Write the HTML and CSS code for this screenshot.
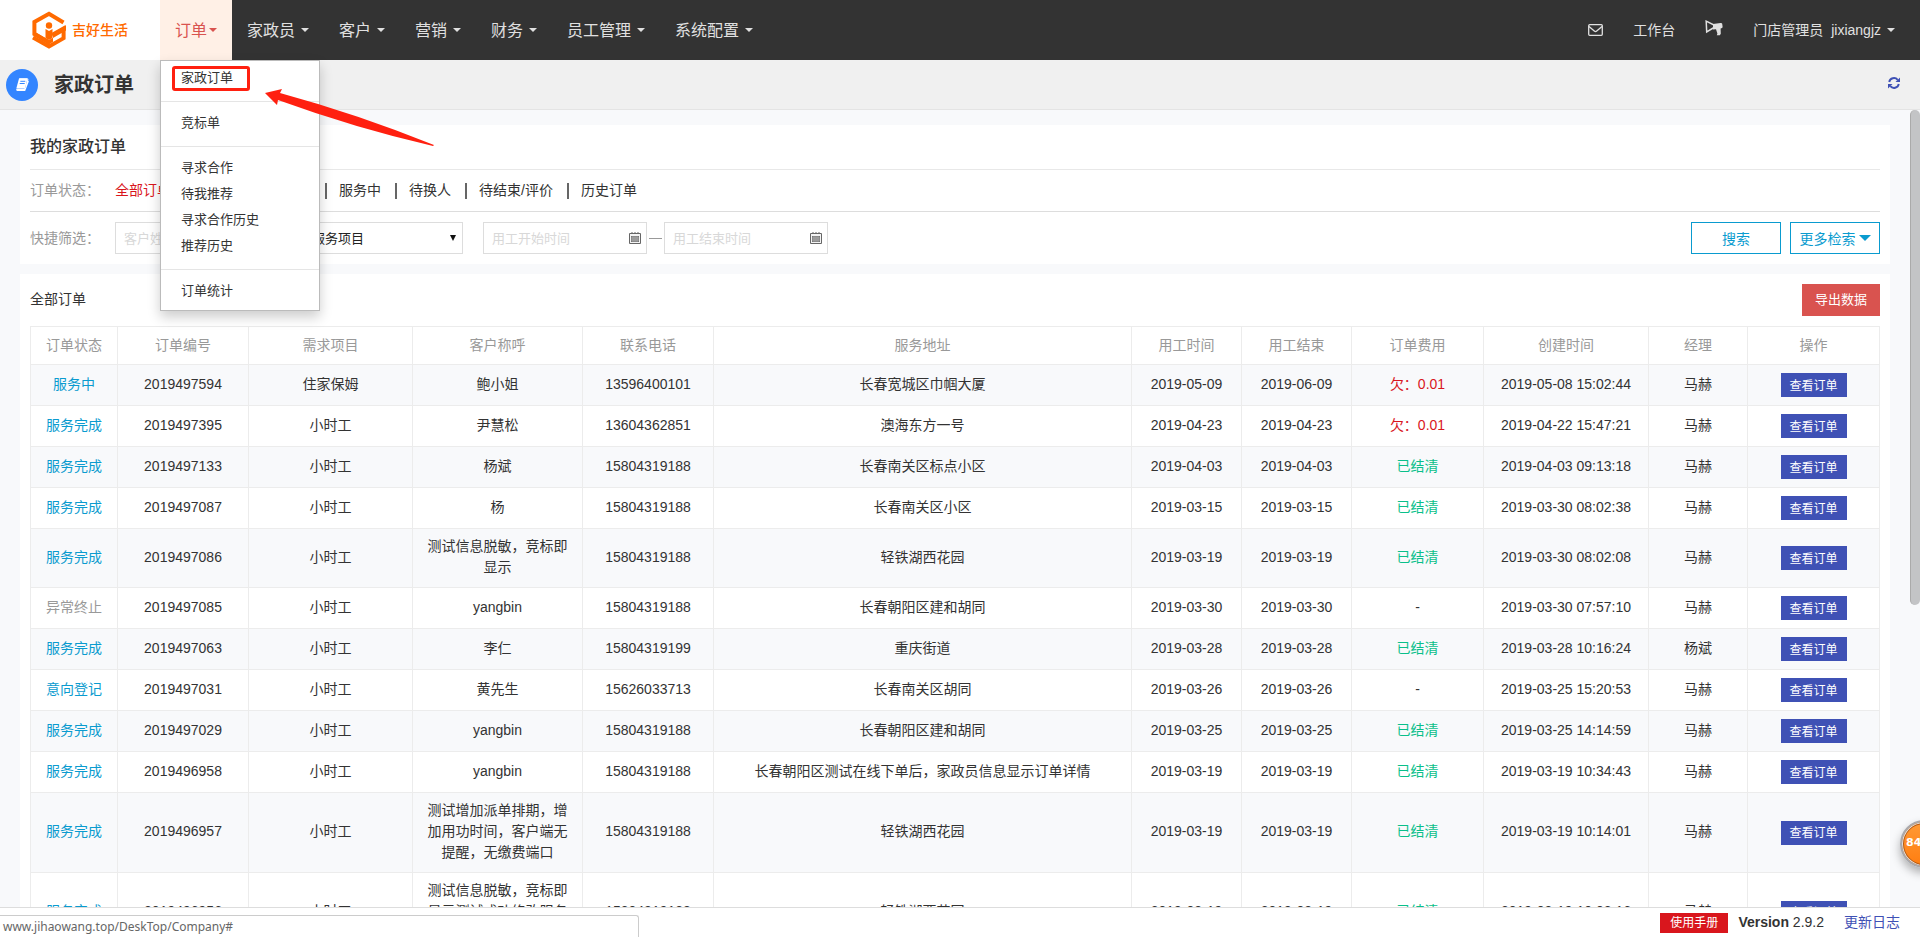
FILE: index.html
```html
<!DOCTYPE html>
<html lang="zh-CN">
<head>
<meta charset="utf-8">
<title>家政订单</title>
<link rel="stylesheet" href="styles.css">
</head>
<body>
<header class="topbar">
  <a class="logo" href="#">
    <svg width="34" height="38" viewBox="0 0 34 38" fill="none" stroke="#ff6a00" stroke-width="4">
      <path d="M31.500 11.500 17 2.800 2.400 11V23L17 31.500"/>
      <path d="M1 26.500 17 35.400 31.600 27.200V17.500L20 24"/>
      <path d="M1.500 20 17 29l4-2.300v4L17 33.500 1.500 24z" fill="#ff6a00" stroke="none"/>
      <path d="M34 14.500v5L21 27v-5z" fill="#ff6a00" stroke="none"/>
      <circle cx="17" cy="14.500" r="3.200" fill="#ff6a00" stroke="none"/>
      <path d="M13.500 18l3.500 2 3.500-2v9L17 29l-3.500-2z" fill="#ff6a00" stroke="none"/>
    </svg>
    <span>吉好生活</span>
  </a>
  <nav class="nav">
    <div class="nav-item">
      <a class="nav-link active" href="#">订单<i class="caret"></i></a>
      <div class="menu">
        <a href="#">家政订单</a>
        <hr>
        <a href="#">竞标单</a>
        <hr>
        <a href="#">寻求合作</a>
        <a href="#">待我推荐</a>
        <a href="#">寻求合作历史</a>
        <a href="#">推荐历史</a>
        <hr>
        <a href="#">订单统计</a>
      </div>
    </div>
    <a class="nav-link" href="#">家政员<i class="caret"></i></a>
    <a class="nav-link" href="#">客户<i class="caret"></i></a>
    <a class="nav-link" href="#">营销<i class="caret"></i></a>
    <a class="nav-link" href="#">财务<i class="caret"></i></a>
    <a class="nav-link" href="#">员工管理<i class="caret"></i></a>
    <a class="nav-link" href="#">系统配置<i class="caret"></i></a>
  </nav>
  <nav class="nav user">
    <a class="nav-link" href="#" aria-label="消息">
      <svg width="15" height="12" viewBox="0 0 15 12" fill="none" stroke="#e0e0e0" stroke-width="1.300"><rect x=".7" y=".7" width="13.600" height="10.600" rx="1"/><path d="M1 2.500l5.300 4.600q1.200 1 2.400 0L14 2.500"/></svg>
    </a>
    <a class="nav-link" href="#">工作台</a>
    <a class="nav-link" href="#" aria-label="公告">
      <svg class="horn" width="18" height="16" viewBox="0 0 18 16"><path d="M1.200 1.200 1.700 12 9 7.500V5z" fill="none" stroke="#e0e0e0" stroke-width="1.500"/><path d="M8 4 15.500 3q1.500-.2 1.700.8l.4 3q.1 1.200-1.200 1.400l-.8.2.2 5.300-1 1.600h-3l.6-1.800-1.400-4.200-3 .2z" fill="#e0e0e0"/></svg>
    </a>
    <a class="nav-link" href="#"><span>门店管理员</span><span class="account">jixiangjz</span><i class="caret"></i></a>
  </nav>
</header>

<div class="titlebar">
  <span class="badge">
    <svg width="14" height="13" viewBox="0 0 14 13"><path d="M4.300.8h7.500q1.300 0 1 1.200L10.600 10q-.4 1.200-1.600 1.200H2.400q-.8 0-.6.7t1 .5h7L13.400 3" fill="none" stroke="#fff" stroke-width="1.100"/><path d="M4 .5h8.500L10 10.500H1.300z" fill="#fff"/><path d="M5.300 3.300h5M4.700 5.500h5" stroke="#3385ff" stroke-width="1"/></svg>
  </span>
  <h1>家政订单</h1>
  <button class="refresh" type="button" aria-label="刷新">
    <svg width="12" height="12" viewBox="0 0 12 12"><path d="M1.200 5A4.900 4.900 0 0 1 9.700 2.800M10.800 7A4.900 4.900 0 0 1 2.300 9.200" fill="none" stroke="#3f51b5" stroke-width="1.900"/><path d="M12 .5V5H7.500zM0 11.500V7h4.500z" fill="#3f51b5"/></svg>
  </button>
</div>

<main class="content">
  <section class="card filters">
    <h2>我的家政订单</h2>
    <div class="row status">
      <span class="label">订单状态：</span>
      <ul class="tabs">
        <li><a class="current" href="#">全部订单</a></li>
        <li><a href="#">待面试</a></li>
        <li><a href="#">待签约</a></li>
        <li><a href="#">服务中</a></li>
        <li><a href="#">待换人</a></li>
        <li><a href="#">待结束/评价</a></li>
        <li><a href="#">历史订单</a></li>
      </ul>
    </div>
    <form class="row search">
      <span class="label">快捷筛选：</span>
      <input class="field" type="text" placeholder="客户姓名" aria-label="客户姓名">
      <div class="select-wrap">
        <select class="field" aria-label="服务项目"><option>服务项目</option></select>
      </div>
      <div class="dates">
        <input class="field date" type="text" placeholder="用工开始时间" aria-label="用工开始时间">
        <svg class="cal" width="12" height="12" viewBox="0 0 12 12"><path d="M.5 1.500h11v10H.5z" fill="#f4f4f4" stroke="#666"/><path d="M3 0v2M9 0v2M5 1h2" stroke="#666"/><path d="M2 4h8v6H2z" fill="#777"/><path d="M2 6h8M2 8h8M4 4v6M6 4v6M8 4v6" stroke="#ccc" stroke-width=".5"/></svg>
      </div>
      <span class="dash"></span>
      <div class="dates">
        <input class="field date" type="text" placeholder="用工结束时间" aria-label="用工结束时间">
        <svg class="cal" width="12" height="12" viewBox="0 0 12 12"><path d="M.5 1.500h11v10H.5z" fill="#f4f4f4" stroke="#666"/><path d="M3 0v2M9 0v2M5 1h2" stroke="#666"/><path d="M2 4h8v6H2z" fill="#777"/><path d="M2 6h8M2 8h8M4 4v6M6 4v6M8 4v6" stroke="#ccc" stroke-width=".5"/></svg>
      </div>
      <div class="actions">
        <button class="outline" type="button">搜索</button>
        <button class="outline" type="button">更多检索<i class="caret big"></i></button>
      </div>
    </form>
  </section>

  <section class="card orders">
    <div class="orders-head">
      <span>全部订单</span>
      <button class="export" type="button">导出数据</button>
    </div>
    <table>
      <colgroup>
        <col class="w-status"><col class="w-no"><col class="w-item"><col class="w-name"><col class="w-no"><col><col class="w-date"><col class="w-date"><col class="w-fee"><col class="w-time"><col class="w-mgr"><col class="w-op">
      </colgroup>
      <thead>
        <tr><th>订单状态</th><th>订单编号</th><th>需求项目</th><th>客户称呼</th><th>联系电话</th><th>服务地址</th><th>用工时间</th><th>用工结束</th><th>订单费用</th><th>创建时间</th><th>经理</th><th>操作</th></tr>
      </thead>
      <tbody>
        <tr><td><a href="#">服务中</a></td><td>2019497594</td><td>住家保姆</td><td>鲍小姐</td><td>13596400101</td><td>长春宽城区巾帼大厦</td><td>2019-05-09</td><td>2019-06-09</td><td class="owed">欠：0.01</td><td>2019-05-08 15:02:44</td><td>马赫</td><td><button type="button" class="view">查看订单</button></td></tr>
        <tr><td><a href="#">服务完成</a></td><td>2019497395</td><td>小时工</td><td>尹慧松</td><td>13604362851</td><td>澳海东方一号</td><td>2019-04-23</td><td>2019-04-23</td><td class="owed">欠：0.01</td><td>2019-04-22 15:47:21</td><td>马赫</td><td><button type="button" class="view">查看订单</button></td></tr>
        <tr><td><a href="#">服务完成</a></td><td>2019497133</td><td>小时工</td><td>杨斌</td><td>15804319188</td><td>长春南关区标点小区</td><td>2019-04-03</td><td>2019-04-03</td><td class="paid">已结清</td><td>2019-04-03 09:13:18</td><td>马赫</td><td><button type="button" class="view">查看订单</button></td></tr>
        <tr><td><a href="#">服务完成</a></td><td>2019497087</td><td>小时工</td><td>杨</td><td>15804319188</td><td>长春南关区小区</td><td>2019-03-15</td><td>2019-03-15</td><td class="paid">已结清</td><td>2019-03-30 08:02:38</td><td>马赫</td><td><button type="button" class="view">查看订单</button></td></tr>
        <tr><td><a href="#">服务完成</a></td><td>2019497086</td><td>小时工</td><td>测试信息脱敏，竞标即显示</td><td>15804319188</td><td>轻铁湖西花园</td><td>2019-03-19</td><td>2019-03-19</td><td class="paid">已结清</td><td>2019-03-30 08:02:08</td><td>马赫</td><td><button type="button" class="view">查看订单</button></td></tr>
        <tr><td><a class="ended" href="#">异常终止</a></td><td>2019497085</td><td>小时工</td><td>yangbin</td><td>15804319188</td><td>长春朝阳区建和胡同</td><td>2019-03-30</td><td>2019-03-30</td><td>-</td><td>2019-03-30 07:57:10</td><td>马赫</td><td><button type="button" class="view">查看订单</button></td></tr>
        <tr><td><a href="#">服务完成</a></td><td>2019497063</td><td>小时工</td><td>李仁</td><td>15804319199</td><td>重庆街道</td><td>2019-03-28</td><td>2019-03-28</td><td class="paid">已结清</td><td>2019-03-28 10:16:24</td><td>杨斌</td><td><button type="button" class="view">查看订单</button></td></tr>
        <tr><td><a href="#">意向登记</a></td><td>2019497031</td><td>小时工</td><td>黄先生</td><td>15626033713</td><td>长春南关区胡同</td><td>2019-03-26</td><td>2019-03-26</td><td>-</td><td>2019-03-25 15:20:53</td><td>马赫</td><td><button type="button" class="view">查看订单</button></td></tr>
        <tr><td><a href="#">服务完成</a></td><td>2019497029</td><td>小时工</td><td>yangbin</td><td>15804319188</td><td>长春朝阳区建和胡同</td><td>2019-03-25</td><td>2019-03-25</td><td class="paid">已结清</td><td>2019-03-25 14:14:59</td><td>马赫</td><td><button type="button" class="view">查看订单</button></td></tr>
        <tr><td><a href="#">服务完成</a></td><td>2019496958</td><td>小时工</td><td>yangbin</td><td>15804319188</td><td>长春朝阳区测试在线下单后，家政员信息显示订单详情</td><td>2019-03-19</td><td>2019-03-19</td><td class="paid">已结清</td><td>2019-03-19 10:34:43</td><td>马赫</td><td><button type="button" class="view">查看订单</button></td></tr>
        <tr><td><a href="#">服务完成</a></td><td>2019496957</td><td>小时工</td><td>测试增加派单排期，增加用功时间，客户端无提醒，无缴费端口</td><td>15804319188</td><td>轻铁湖西花园</td><td>2019-03-19</td><td>2019-03-19</td><td class="paid">已结清</td><td>2019-03-19 10:14:01</td><td>马赫</td><td><button type="button" class="view">查看订单</button></td></tr>
        <tr><td><a href="#">服务完成</a></td><td>2019496956</td><td>小时工</td><td>测试信息脱敏，竞标即显示测试成功修改服务人员信息</td><td>15804319188</td><td>轻铁湖西花园</td><td>2019-03-19</td><td>2019-03-19</td><td class="paid">已结清</td><td>2019-03-19 10:02:16</td><td>马赫</td><td><button type="button" class="view">查看订单</button></td></tr>
      </tbody>
    </table>
  </section>
  <div class="thumb"></div>
</main>

<footer class="footer">
  <a class="manual" href="#">使用手册</a>
  <span class="version"><b>Version</b> 2.9.2</span>
  <a class="log" href="#">更新日志</a>
  <div class="link-hint">www.jihaowang.top/DeskTop/Company#</div>
</footer>

<div class="score">84</div>
<div class="mark"></div>
<svg class="arrow" width="170" height="60" viewBox="0 0 170 60"><path d="M0 4 17 0 15 4Q92 25 169 56L168 57Q90 39 13 11L12 16z" fill="#ff2010"/></svg>
</body>
</html>
```
FILE: styles.css
```css
* { box-sizing: border-box; }
body {
  margin: 0;
  height: 100vh;
  display: flex;
  flex-direction: column;
  overflow: hidden;
  background: #f8f9fb;
  color: #333;
  font: 14px/21px "Liberation Sans", "Noto Sans CJK SC", sans-serif;
}
a { text-decoration: none; color: inherit; }
button, input, select { font-family: inherit; margin: 0; }
svg { display: block; flex: none; }

.topbar {
  flex: none;
  display: flex;
  height: 60px;
  background: #333;
}
.logo {
  width: 160px;
  padding-left: 32px;
  display: flex;
  align-items: center;
  gap: 6px;
  background: #fff;
  color: #ff6a00;
  font-weight: 500;
}
.nav { display: flex; font-size: 16px; }
.nav-item { position: relative; }
.nav-link {
  height: 60px;
  padding: 0 15px;
  display: flex;
  align-items: center;
  gap: 6px;
  color: #e0e0e0;
}
.nav-link.active { background: #fff0e6; color: #d9534f; gap: 2px; }
.caret {
  border: 4px solid transparent;
  border-top-color: currentColor;
  border-bottom: 0;
}
.caret.big { border-width: 6px; border-bottom: 0; }
.user { margin-left: auto; margin-right: 10px; font-size: 14px; }
.account { margin-left: 2px; }
.horn { margin-bottom: 4px; }

.menu {
  position: absolute;
  z-index: 5;
  top: 60px;
  left: 0;
  width: 160px;
  padding: 4px 0 6px;
  background: #fff;
  border: 1px solid #bbb;
  box-shadow: 0 6px 12px rgba(0, 0, 0, .2);
  font-size: 13px;
}
.menu a { display: block; padding-left: 20px; line-height: 26px; }
.menu hr { height: 1px; margin: 10px 0 8px; border: 0; background: #e5e5e5; }

.titlebar {
  flex: none;
  display: flex;
  align-items: center;
  height: 50px;
  padding: 0 20px 0 6px;
  background: #f0f0f0;
  border-bottom: 1px solid #e4e4e4;
}
.badge {
  width: 32px;
  height: 32px;
  display: flex;
  align-items: center;
  justify-content: center;
  border-radius: 50%;
  background: #3385ff;
}
h1 { margin: 0 auto 0 16px; font-size: 20px; line-height: 28px; }
.refresh { margin-bottom: 4px; padding: 0; border: 0; background: none; }

.content {
  flex: 1;
  min-height: 0;
  overflow: hidden;
  position: relative;
  padding: 15px 30px 0 20px;
}
.thumb {
  position: absolute;
  top: 0;
  right: 0;
  width: 10px;
  height: 495px;
  border-radius: 5px;
  border-left: 1px solid #aaa;
  background: #c3c4c6;
}
.card { background: #fff; padding: 0 10px; margin-bottom: 10px; }
h2 {
  margin: 0;
  font-size: 16px;
  font-weight: 500;
  line-height: 44px;
  border-bottom: 1px solid #e8e8e8;
}
.row { display: flex; align-items: center; }
.label { width: 85px; color: #999; }
.status { height: 42px; border-bottom: 1px solid #ddd; }
.tabs { display: flex; margin: 0; padding: 0; list-style: none; }
.tabs li { display: flex; align-items: center; }
.tabs li + li::before {
  content: "";
  width: 2px;
  height: 16px;
  margin: 0 12px 0 14px;
  background: #666;
}
.current { color: #d9161d; }
.search { padding: 10px 0; }
.field {
  width: 164px;
  height: 32px;
  padding: 0 8px;
  border: 1px solid #ddd;
  border-radius: 0;
  background: #fff;
  color: #222;
  font-size: 13px;
  appearance: none;
}
.field::placeholder { color: #d8d8d8; }
.select-wrap { position: relative; margin: 0 20px; }
.select-wrap select { padding-left: 12px; }
.select-wrap::after {
  content: "";
  position: absolute;
  right: 7px;
  top: 13px;
  border: 3px solid transparent;
  border-top: 6px solid #111;
  border-bottom: 0;
}
.dates { position: relative; }
.cal { position: absolute; right: 6px; top: 10px; }
.dash { width: 13px; height: 1px; margin: 0 2px; background: #999; }
.actions { margin-left: auto; display: flex; gap: 9px; }
.outline {
  width: 90px;
  height: 32px;
  padding: 0;
  display: flex;
  align-items: center;
  justify-content: center;
  gap: 3px;
  border: 1px solid #0a9bcf;
  background: #fff;
  color: #0a9bcf;
  font-size: 14px;
}

.orders { padding: 10px 10px 20px; }
.orders-head {
  display: flex;
  align-items: center;
  justify-content: space-between;
  margin-bottom: 10px;
}
.orders-head span { padding-bottom: 2px; }
.export {
  width: 78px;
  height: 32px;
  padding: 0 0 3px;
  border: 0;
  background: #d9534f;
  color: #fff;
  font-size: 13px;
}
table {
  width: 100%;
  table-layout: fixed;
  border-collapse: collapse;
  text-align: center;
}
th, td { border: 1px solid #ececec; padding: 7px 14px 9px; }
th { color: #999; font-weight: 400; padding: 8px 4px; }
td:first-child, td:nth-child(n+7) { padding: 7px 4px 9px; }
td:last-child { padding: 8px 4px; }
td a { color: #0a9bcf; }
td a.ended { color: #999; }
tbody tr:nth-child(odd) { background: #f8f9fb; }
.w-status { width: 87px; }
.w-no { width: 131px; }
.w-item { width: 164px; }
.w-name { width: 170px; }
.w-date { width: 110px; }
.w-fee { width: 132px; }
.w-time { width: 165px; }
.w-mgr { width: 99px; }
.w-op { width: 132px; }
.owed { color: #d9161d; }
.paid { color: #0abf8a; }
.view {
  display: block;
  width: 66px;
  height: 24px;
  margin: 0 auto;
  padding: 0 0 2px;
  border: 0;
  background: #3f51b5;
  color: #fff;
  font-size: 12px;
}

.footer {
  flex: none;
  position: relative;
  display: flex;
  align-items: center;
  justify-content: flex-end;
  height: 30px;
  padding: 0 20px;
  border-top: 1px solid #ddd;
  background: #fff;
}
.manual {
  width: 68px;
  margin-right: 10px;
  background: #d9161d;
  color: #fff;
  font-size: 12px;
  line-height: 20px;
  text-align: center;
}
.log { margin-left: 20px; color: #3f51b5; }
.link-hint {
  position: absolute;
  left: 0;
  bottom: 0;
  width: 639px;
  height: 22px;
  padding-left: 3px;
  border: 1px solid #ccc;
  border-width: 1px 1px 0 0;
  border-top-right-radius: 3px;
  background: #fff;
  color: #666;
  font: 12px/22px "Noto Sans", sans-serif;
}
.score {
  position: absolute;
  right: -28px;
  top: 820px;
  width: 48px;
  height: 48px;
  padding-left: 4px;
  border: 2px solid #a9a9ad;
  border-radius: 50%;
  background: linear-gradient(#ff9a35, #ff7d10);
  box-shadow: inset 0 0 0 1px #e4e4e4, inset 0 0 0 2px #b85a10, 0 5px 10px rgba(0, 0, 0, .3);
  color: #fff;
  font: bold 11px/42px "DejaVu Sans", sans-serif;
}
.mark {
  position: absolute;
  z-index: 6;
  left: 172px;
  top: 66px;
  width: 78px;
  height: 25px;
  border: 3px solid #ff2010;
  border-radius: 3px;
}
.arrow { position: absolute; z-index: 6; left: 265px; top: 89px; }
```
